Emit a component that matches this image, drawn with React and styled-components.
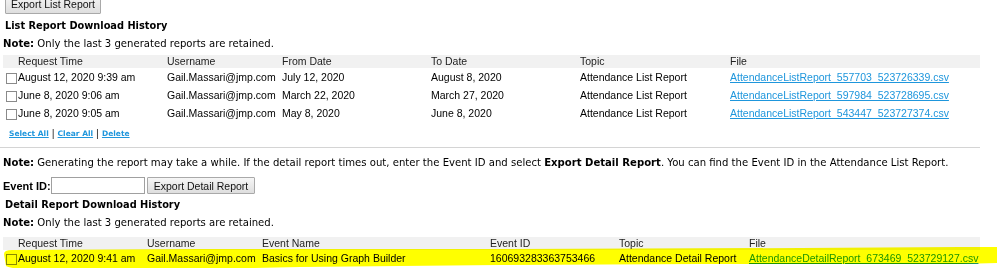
import React from "react";
import styled, { createGlobalStyle } from "styled-components";

const GlobalStyle = createGlobalStyle`
  body {
    margin: 0;
    background: #fff;
    color: #000;
    font-family: "Liberation Sans", Arial, sans-serif;
    overflow: hidden;
  }
`;

const listReports = [
  {
    time: "August 12, 2020 9:39 am",
    user: "Gail.Massari@jmp.com",
    from: "July 12, 2020",
    to: "August 8, 2020",
    topic: "Attendance List Report",
    file: "AttendanceListReport_557703_523726339.csv",
  },
  {
    time: "June 8, 2020 9:06 am",
    user: "Gail.Massari@jmp.com",
    from: "March 22, 2020",
    to: "March 27, 2020",
    topic: "Attendance List Report",
    file: "AttendanceListReport_597984_523728695.csv",
  },
  {
    time: "June 8, 2020 9:05 am",
    user: "Gail.Massari@jmp.com",
    from: "May 8, 2020",
    to: "June 8, 2020",
    topic: "Attendance List Report",
    file: "AttendanceListReport_543447_523727374.csv",
  },
];

const detailReports = [
  {
    time: "August 12, 2020 9:41 am",
    user: "Gail.Massari@jmp.com",
    event: "Basics for Using Graph Builder",
    id: "160693283363753466",
    topic: "Attendance Detail Report",
    file: "AttendanceDetailReport_673469_523729127.csv",
  },
];

const App = () => {
  return (
    <>
      <GlobalStyle />
      <Page>
        <Button $top={-6} $width={96}>Export List Report</Button>
        <Heading $top={5}>List Report Download History</Heading>
        <Note $top={4}>
          <b>Note:</b> Only the last 3 generated reports are retained.
        </Note>

        <TableWrap $top={4}>
          <Table>
            <colgroup>
              <col style={{ width: 15 }} />
              <col style={{ width: 149 }} />
              <col style={{ width: 115 }} />
              <col style={{ width: 149 }} />
              <col style={{ width: 149 }} />
              <col style={{ width: 150 }} />
              <col style={{ width: 250 }} />
            </colgroup>
            <thead>
              <HeadRow>
                <th />
                <th>Request Time</th>
                <th>Username</th>
                <th>From Date</th>
                <th>To Date</th>
                <th>Topic</th>
                <th>File</th>
              </HeadRow>
            </thead>
            <tbody>
              {listReports.map((r) => (
                <Row key={r.file}>
                  <td>
                    <Check />
                  </td>
                  <td>{r.time}</td>
                  <td>{r.user}</td>
                  <td>{r.from}</td>
                  <td>{r.to}</td>
                  <td>{r.topic}</td>
                  <td>
                    <FileLink href="#">{r.file}</FileLink>
                  </td>
                </Row>
              ))}
            </tbody>
          </Table>
        </TableWrap>

        <Actions>
          <ActionLink href="#">Select All</ActionLink>
          <Sep>|</Sep>
          <ActionLink href="#">Clear All</ActionLink>
          <Sep>|</Sep>
          <ActionLink href="#">Delete</ActionLink>
        </Actions>

        <Rule />

        <Note $top={8}>
          <b>Note:</b> Generating the report may take a while. If the detail report times
          out, enter the Event ID and select <b>Export Detail Report</b>. You can find the
          Event ID in the Attendance List Report.
        </Note>

        <EventRow>
          <Label>Event ID:</Label>
          <EventInput type="text" />
          <Button $top={0} $width={108}>Export Detail Report</Button>
        </EventRow>

        <Heading $top={4}>Detail Report Download History</Heading>
        <Note $top={4}>
          <b>Note:</b> Only the last 3 generated reports are retained.
        </Note>

        <TableWrap $top={7}>
          <Table>
            <colgroup>
              <col style={{ width: 15 }} />
              <col style={{ width: 129 }} />
              <col style={{ width: 115 }} />
              <col style={{ width: 228 }} />
              <col style={{ width: 129 }} />
              <col style={{ width: 130 }} />
              <col style={{ width: 231 }} />
            </colgroup>
            <thead>
              <HeadRow>
                <th />
                <th>Request Time</th>
                <th>Username</th>
                <th>Event Name</th>
                <th>Event ID</th>
                <th>Topic</th>
                <th>File</th>
              </HeadRow>
            </thead>
            <tbody>
              {detailReports.map((r) => (
                <Row key={r.file} $h={15}>
                  <td>
                    <Check />
                  </td>
                  <td>{r.time}</td>
                  <td>{r.user}</td>
                  <td>{r.event}</td>
                  <td>{r.id}</td>
                  <td>{r.topic}</td>
                  <td>
                    <FileLink href="#">{r.file}</FileLink>
                  </td>
                </Row>
              ))}
            </tbody>
          </Table>
          {/* hand-drawn marker stroke over the newest detail report */}
          <Marker viewBox="0 0 997 34" preserveAspectRatio="none">
            <path d="M4 17 Q4 13 12 13 L200 12 L500 12 L800 11 L960 10 L997 10 L997 26 L960 27 L700 27 L500 28 L300 30 L200 32 L40 33 Q10 32 6 29 Z" />
          </Marker>
        </TableWrap>
      </Page>
    </>
  );
};
export default App;

const Page = styled.div`
  width: 997px;
  height: 268px;
  overflow: hidden;
`;

const Button = styled.button`
  display: block;
  margin: ${(p) => p.$top}px 0 0 ${(p) => (p.$top < 0 ? 5 : 0)}px;
  width: ${(p) => p.$width}px;
  height: ${(p) => (p.$top < 0 ? 20 : 17)}px;
  padding: 0;
  font-family: "Liberation Sans", Arial, sans-serif;
  font-size: 10.5px;
  color: #111;
  background: linear-gradient(#f6f6f6, #dedede);
  border: 1px solid #a9a9a9;
  border-radius: 1px;
`;

const Heading = styled.div`
  margin: ${(p) => p.$top}px 0 0 5px;
  font-family: "DejaVu Sans", Verdana, sans-serif;
  font-weight: bold;
  font-size: 9.8px;
  line-height: 14px;
`;

const Note = styled.div`
  margin: ${(p) => p.$top}px 0 0 3px;
  font-family: "DejaVu Sans", Verdana, sans-serif;
  font-size: 10.1px;
  line-height: 14px;
  white-space: nowrap;
  b {
    font-weight: bold;
  }
`;

const TableWrap = styled.div`
  position: relative;
  margin-top: ${(p) => p.$top}px;
`;

const Table = styled.table`
  margin-left: 3px;
  width: 977px;
  table-layout: fixed;
  border-collapse: collapse;
  font-family: "Liberation Sans", Arial, sans-serif;
  font-size: 10.5px;
  th,
  td {
    padding: 0;
    text-align: left;
    white-space: nowrap;
    overflow: hidden;
  }
`;

const HeadRow = styled.tr`
  height: 13px;
  background: #f1f1f1;
  th {
    font-weight: normal;
    color: #222;
    line-height: 13px;
  }
`;

const Row = styled.tr`
  height: ${(p) => p.$h || 18}px;
  td {
    vertical-align: middle;
  }
`;

const Check = styled.span`
  display: block;
  width: 9px;
  height: 9px;
  margin: 3px 0 0 3px;
  border: 1px solid #8a8a8a;
  background: #fff;
`;

const FileLink = styled.a`
  color: #1e96dc;
  text-decoration: underline;
`;

const Actions = styled.div`
  margin: 5px 0 0 9px;
  display: flex;
  align-items: center;
  gap: 3px;
  height: 12px;
  font-family: "DejaVu Sans", Verdana, sans-serif;
  font-size: 7.5px;
  font-weight: bold;
`;

const ActionLink = styled.a`
  color: #1e96dc;
  text-decoration: underline;
`;

const Sep = styled.span`
  font-family: "Liberation Sans", Arial, sans-serif;
  font-weight: normal;
  font-size: 11px;
  color: #333;
`;

const Rule = styled.div`
  margin-top: 8px;
  width: 980px;
  height: 1px;
  background: #d4d4d4;
`;

const EventRow = styled.div`
  display: flex;
  align-items: center;
  margin: 7px 0 0 3px;
  height: 17px;
`;

const Label = styled.span`
  font-family: "Liberation Sans", Arial, sans-serif;
  font-weight: bold;
  font-size: 11px;
  width: 48px;
`;

const EventInput = styled.input`
  box-sizing: border-box;
  width: 94px;
  height: 17px;
  margin: 0 2px 0 0;
  border: 1px solid #a0a0a0;
  padding: 0 2px;
  background: #fff;
`;

const Marker = styled.svg`
  position: absolute;
  left: 0;
  top: 0;
  width: 997px;
  height: 34px;
  pointer-events: none;
  mix-blend-mode: multiply;
  path {
    fill: #ffff00;
  }
`;
